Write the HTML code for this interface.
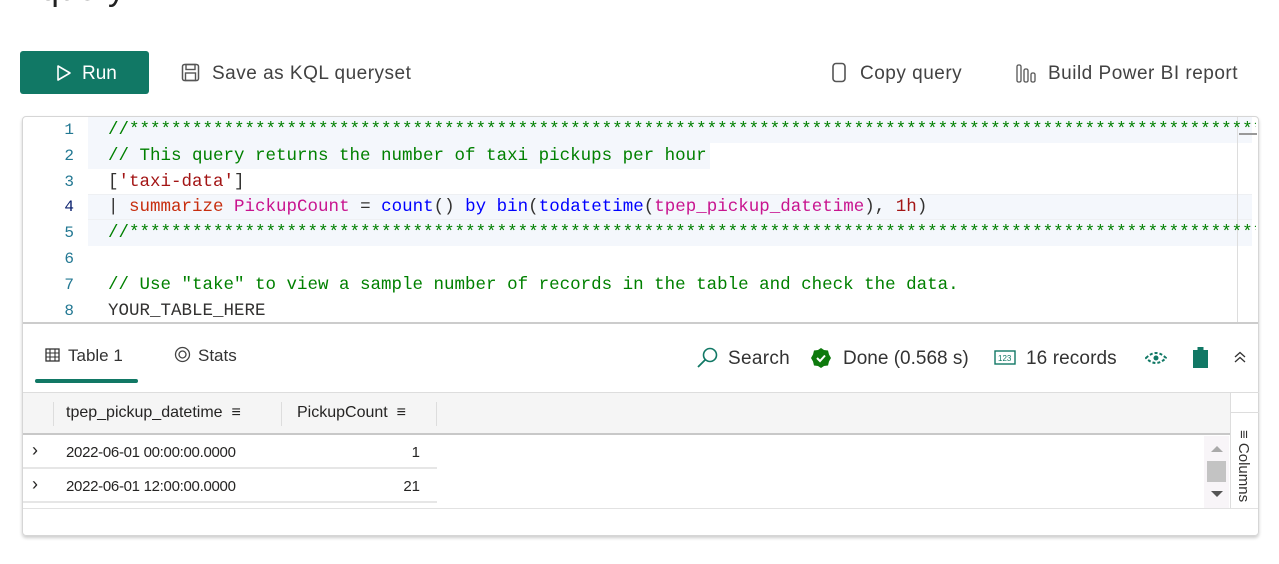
<!DOCTYPE html>
<html><head><meta charset="utf-8"><style>
*{margin:0;padding:0;box-sizing:border-box}
body{width:1279px;height:564px;background:#fff;position:relative;overflow:hidden;font-family:"Liberation Sans",sans-serif;color:#323130}
.a{position:absolute}
.btn{left:20px;top:51px;width:129px;height:43px;background:#117865;border-radius:3px;color:#fff;font-size:19px}
.tb{font-size:19px;color:#424242;white-space:nowrap;letter-spacing:.5px}
.ed{left:22px;top:116px;width:1237px;height:420px;border:1px solid #d6d6d6;border-radius:4px;box-shadow:0 2px 3px rgba(0,0,0,.2)}
.code{font-family:"Liberation Mono",monospace;font-size:17.5px;white-space:pre;line-height:25.8px}
.ln{left:40px;width:34px;text-align:right;color:#237893;font-family:"Liberation Mono",monospace;font-size:16px}
.hl{left:88px;height:25.8px;background:#f4f7fc}
.c{color:#008000}.s{color:#a31515}.k{color:#0000ff}.o{color:#c72e0f}.p{color:#c8148f}
.tbl{font-size:16px;color:#252423}
</style></head><body>
<div class="a" style="left:40px;top:-30px;font-size:34px;color:#222">query</div>

<div class="a btn"><svg class="a" style="left:35px;top:13px" width="18" height="18" viewBox="0 0 18 18"><path d="M3 2 L15 9 L3 16 Z" fill="none" stroke="#fff" stroke-width="1.6" stroke-linejoin="round"/></svg><span class="a" style="left:62px;top:12px">Run</span></div>
<svg class="a" style="left:181px;top:63px" width="19" height="19" viewBox="0 0 19 19"><rect x="1.5" y="1.5" width="16" height="16" rx="2" fill="none" stroke="#555" stroke-width="1.5"/><rect x="5" y="1.5" width="9" height="5" fill="none" stroke="#555" stroke-width="1.4"/><rect x="4.5" y="10" width="10" height="7.5" fill="none" stroke="#555" stroke-width="1.4"/></svg>
<div class="a tb" style="left:212px;top:63px">Save as KQL queryset</div>
<svg class="a" style="left:830px;top:62px" width="18" height="22" viewBox="0 0 18 22"><rect x="3" y="1.5" width="12" height="18" rx="3" fill="none" stroke="#555" stroke-width="1.6"/></svg>
<div class="a tb" style="left:860px;top:63px">Copy query</div>
<svg class="a" style="left:1016px;top:64px" width="22" height="20" viewBox="0 0 22 20"><rect x="1" y="1" width="4" height="17" rx="1.5" fill="none" stroke="#555" stroke-width="1.3"/><rect x="8" y="5" width="4" height="13" rx="1.5" fill="none" stroke="#555" stroke-width="1.3"/><rect x="15" y="9" width="4" height="9" rx="1.5" fill="none" stroke="#555" stroke-width="1.3"/></svg>
<div class="a tb" style="left:1048px;top:63px">Build Power BI report</div>

<div class="a ed"></div>
<div class="a hl" style="top:117px;width:1164px"></div>
<div class="a hl" style="top:143px;width:622px"></div>
<div class="a hl" style="top:194px;width:1164px;border-top:1px solid #eef0f3;border-bottom:1px solid #eef0f3"></div>
<div class="a hl" style="top:220px;width:1164px"></div>
<div class="a" style="left:1237px;top:117px;width:1px;height:206px;background:#ddd"></div>
<div class="a" style="left:1239px;top:133px;width:18px;height:2px;background:#999"></div>
<div class="a ln code" style="top:118px;line-height:25.8px">1
2
3
<span style="color:#0b216f">4</span>
5
6
7
8</div>
<div class="a code" style="left:108px;top:118px;width:1148px;overflow:hidden"><span class="c">//*************************************************************************************************************</span>
<span class="c">// This query returns the number of taxi pickups per hour</span>
[<span class="s">'taxi-data'</span>]
| <span class="o">summarize</span> <span class="p">PickupCount</span> = <span class="k">count</span>() <span class="k">by</span> <span class="k">bin</span>(<span class="k">todatetime</span>(<span class="p">tpep_pickup_datetime</span>), <span class="s">1h</span>)
<span class="c">//*************************************************************************************************************</span>

<span class="c">// Use "take" to view a sample number of records in the table and check the data.</span>
YOUR_TABLE_HERE</div>
<div class="a" style="left:23px;top:322px;width:1235px;height:2px;background:#ccc"></div>

<svg class="a" style="left:45px;top:348px" width="15" height="14" viewBox="0 0 15 14"><rect x="1" y="1" width="13" height="12" fill="none" stroke="#333" stroke-width="1.3"/><path d="M1 5H14M1 9H14M5 1V13M10 1V13" stroke="#333" stroke-width="1.1"/></svg>
<div class="a tb" style="left:68px;top:346px;font-size:17px;color:#333;letter-spacing:0">Table 1</div>
<div class="a" style="left:35px;top:379px;width:103px;height:4px;background:#117865;border-radius:2px"></div>
<svg class="a" style="left:174px;top:346px" width="17" height="17" viewBox="0 0 17 17"><circle cx="8.5" cy="8.5" r="7" fill="none" stroke="#444" stroke-width="1.3"/><circle cx="8.5" cy="8.5" r="3.5" fill="none" stroke="#444" stroke-width="1.3"/></svg>
<div class="a tb" style="left:198px;top:346px;font-size:17px;color:#333;letter-spacing:0">Stats</div>

<svg class="a" style="left:696px;top:346px" width="24" height="24" viewBox="0 0 24 24"><circle cx="14" cy="9" r="6.5" fill="none" stroke="#117865" stroke-width="1.6"/><path d="M9.5 13.5 L2 21" stroke="#117865" stroke-width="1.8"/></svg>
<div class="a tb" style="left:728px;top:348px;color:#333;letter-spacing:.3px">Search</div>
<svg class="a" style="left:810px;top:347px" width="22" height="22" viewBox="0 0 22 22"><path d="M11 1 L14 3 L18 3.5 L19 7.5 L21 11 L19 14.5 L18 18.5 L14 19 L11 21 L8 19 L4 18.5 L3 14.5 L1 11 L3 7.5 L4 3.5 L8 3Z" fill="#0e7a0d"/><path d="M7 11 L10 14 L15 8.5" fill="none" stroke="#fff" stroke-width="2"/></svg>
<div class="a tb" style="left:843px;top:348px;color:#333;letter-spacing:0">Done (0.568 s)</div>
<svg class="a" style="left:994px;top:350px" width="22" height="15" viewBox="0 0 22 15"><rect x="1" y="1" width="20" height="13" fill="none" stroke="#117865" stroke-width="1.4"/><text x="4" y="11" font-size="8" fill="#117865" font-family="Liberation Sans">123</text></svg>
<div class="a tb" style="left:1026px;top:348px;color:#333;letter-spacing:.1px">16 records</div>
<svg class="a" style="left:1145px;top:351px" width="22" height="14" viewBox="0 0 22 14"><path d="M1 7 Q11 -3 21 7 Q11 17 1 7Z" fill="none" stroke="#117865" stroke-width="2" stroke-dasharray="3 2"/><circle cx="11" cy="7" r="2.5" fill="#117865"/></svg>
<svg class="a" style="left:1192px;top:346px" width="17" height="23" viewBox="0 0 17 23"><rect x="1" y="4" width="15" height="18" fill="#117865"/><rect x="5.5" y="1" width="6" height="4" fill="#117865"/></svg>
<svg class="a" style="left:1233px;top:351px" width="14" height="12" viewBox="0 0 14 12"><path d="M2 6 L7 1.5 L12 6 M2 11 L7 6.5 L12 11" fill="none" stroke="#333" stroke-width="1.3"/></svg>

<div class="a" style="left:23px;top:392px;width:1207px;height:43px;background:#f5f5f5;border-top:1px solid #ddd;border-bottom:2px solid #c8c8c8"></div>
<div class="a" style="left:53px;top:402px;width:1px;height:24px;background:#ddd"></div>
<div class="a" style="left:281px;top:402px;width:1px;height:24px;background:#ddd"></div>
<div class="a" style="left:436px;top:402px;width:1px;height:24px;background:#ddd"></div>
<div class="a tbl" style="left:66px;top:404px">tpep_pickup_datetime &nbsp;≡</div>
<div class="a tbl" style="left:297px;top:404px">PickupCount &nbsp;≡</div>
<div class="a" style="left:1230px;top:392px;width:29px;height:21px;border-left:1px solid #ddd;border-bottom:1px solid #ddd;border-top:1px solid #ddd"></div>
<div class="a" style="left:1230px;top:413px;width:1px;height:95px;background:#ddd"></div>
<div class="a" style="top:430px;font-size:15px;transform:rotate(90deg);transform-origin:left top;left:1252px;white-space:nowrap">≡ Columns</div>

<div class="a tbl" style="left:32px;top:440px;font-size:18px">›</div>
<div class="a tbl" style="left:66px;top:444px;font-size:15px;letter-spacing:-.3px">2022-06-01 00:00:00.0000</div>
<div class="a tbl" style="left:400px;top:444px;width:20px;text-align:right;font-size:15px">1</div>
<div class="a" style="left:23px;top:467px;width:414px;height:2px;background:#e6e6e6"></div>
<div class="a tbl" style="left:32px;top:474px;font-size:18px">›</div>
<div class="a tbl" style="left:66px;top:478px;font-size:15px;letter-spacing:-.3px">2022-06-01 12:00:00.0000</div>
<div class="a tbl" style="left:400px;top:478px;width:20px;text-align:right;font-size:15px">21</div>
<div class="a" style="left:23px;top:501px;width:414px;height:2px;background:#e6e6e6"></div>
<div class="a" style="left:23px;top:508px;width:1235px;height:1px;background:#e2e2e2"></div>
<div class="a" style="left:1204px;top:436px;width:25px;height:72px;background:#f8f5f8"></div>
<div class="a" style="left:1211px;top:446px;width:0;height:0;border:6px solid transparent;border-bottom-color:#aaa;border-top:0"></div>
<div class="a" style="left:1207px;top:461px;width:19px;height:21px;background:#c3c3c3"></div>
<div class="a" style="left:1211px;top:491px;width:0;height:0;border:6px solid transparent;border-top-color:#555;border-bottom:0"></div>
</body></html>
